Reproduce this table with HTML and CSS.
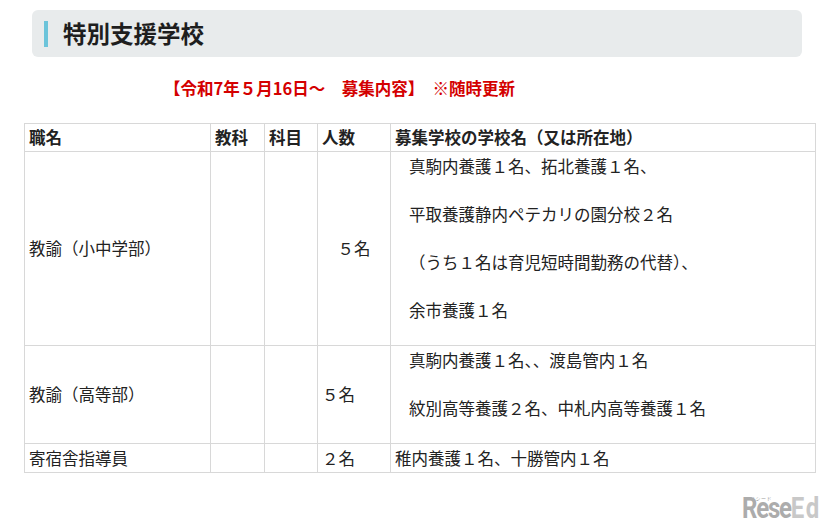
FILE: index.html
```html
<!DOCTYPE html>
<html lang="ja">
<head>
<meta charset="utf-8">
<title>特別支援学校</title>
<link rel="stylesheet" href="styles.css">
</head>
<body>
<div class="page">
  <h2 class="heading"><span class="bar"></span><span>特別支援学校</span></h2>
  <p class="notice">【令和7年５月16日～　募集内容】　※随時更新</p>
  <table class="jobs">
    <colgroup>
      <col class="c1"><col class="c2"><col class="c3"><col class="c4"><col class="c5">
    </colgroup>
    <thead>
      <tr><th>職名</th><th>教科</th><th>科目</th><th>人数</th><th>募集学校の学校名（又は所在地）</th></tr>
    </thead>
    <tbody>
      <tr class="tall">
        <td>教諭（小中学部）</td><td></td><td></td><td class="center">５名</td>
        <td class="list">
          <p>真駒内養護１名、拓北養護１名、</p>
          <p>平取養護静内ペテカリの園分校２名</p>
          <p>（うち１名は育児短時間勤務の代替）、</p>
          <p>余市養護１名</p>
        </td>
      </tr>
      <tr class="tall">
        <td>教諭（高等部）</td><td></td><td></td><td>５名</td>
        <td class="list">
          <p>真駒内養護１名、、渡島管内１名</p>
          <p>紋別高等養護２名、中札内高等養護１名</p>
        </td>
      </tr>
      <tr>
        <td>寄宿舎指導員</td><td></td><td></td><td>２名</td><td>稚内養護１名、十勝管内１名</td>
      </tr>
    </tbody>
  </table>
</div>
<div class="logo"><span class="kana">リシード</span><span class="word"><span class="rese">Rese</span><span class="ed">Ed</span></span></div>
</body>
</html>
```
FILE: styles.css
```css
html, body {
  margin: 0;
  padding: 0;
  background: #ffffff;
}
body {
  font-family: "Noto Sans CJK JP", "Noto Sans", sans-serif;
  color: #222222;
  width: 826px;
  height: 524px;
  overflow: hidden;
  position: relative;
}
.page {
  padding: 10px 11px 0 24px;
}
.heading {
  margin: 0 13px 0 8px;
  height: 47px;
  background: #e8ebec;
  border-radius: 6px;
  display: flex;
  align-items: center;
  gap: 15px;
  padding-left: 12px;
  font-size: 23.5px;
  font-weight: 700;
  line-height: 1;
  color: #1e1e1e;
}
.heading .bar {
  display: block;
  width: 4px;
  height: 26px;
  background: #6cc4da;
}
.notice {
  margin: 19px 0 0 0;
  padding-left: 140px;
  font-size: 16.5px;
  line-height: 24px;
  font-weight: 700;
  color: #d40000;
}
.jobs {
  margin-top: 23px;
  width: 791px;
  border-collapse: collapse;
  table-layout: fixed;
  font-size: 16.5px;
  color: #222222;
}
.c1 { width: 186px; }
.c2 { width: 54px; }
.c3 { width: 53px; }
.c4 { width: 73px; }
.c5 { width: 425px; }
.jobs th, .jobs td {
  border: 1px solid #d8d8d8;
  padding: 0 4px;
  text-align: left;
  vertical-align: middle;
  line-height: 27px;
}
.jobs th {
  font-weight: 700;
  height: 27px;
}
.jobs td {
  height: 28px;
}
.jobs td.center {
  text-align: center;
}
.jobs td.list {
  padding: 1px 4px 0 4px;
}
.jobs td.list p {
  margin: 0 0 21px 0;
  padding-left: 14px;
  line-height: 27px;
}
.logo {
  position: absolute;
  left: 742px;
  top: 493px;
  white-space: nowrap;
}
.logo .word {
  display: block;
  font-family: Roboto, "DejaVu Sans", sans-serif;
  font-weight: 700;
  font-size: 30px;
  line-height: 30px;
  letter-spacing: -1.5px;
  transform: scaleX(0.8);
  transform-origin: left center;
}
.logo .kana {
  position: absolute;
  left: 8px;
  top: 2px;
  font-family: "Noto Sans CJK JP", sans-serif;
  font-weight: 400;
  font-size: 5px;
  line-height: 6px;
  letter-spacing: 0.5px;
  color: #a0a0a0;
}
.logo .rese { color: #acacac; }
.logo .ed { color: #c8c8c8; letter-spacing: 2px; }
```
